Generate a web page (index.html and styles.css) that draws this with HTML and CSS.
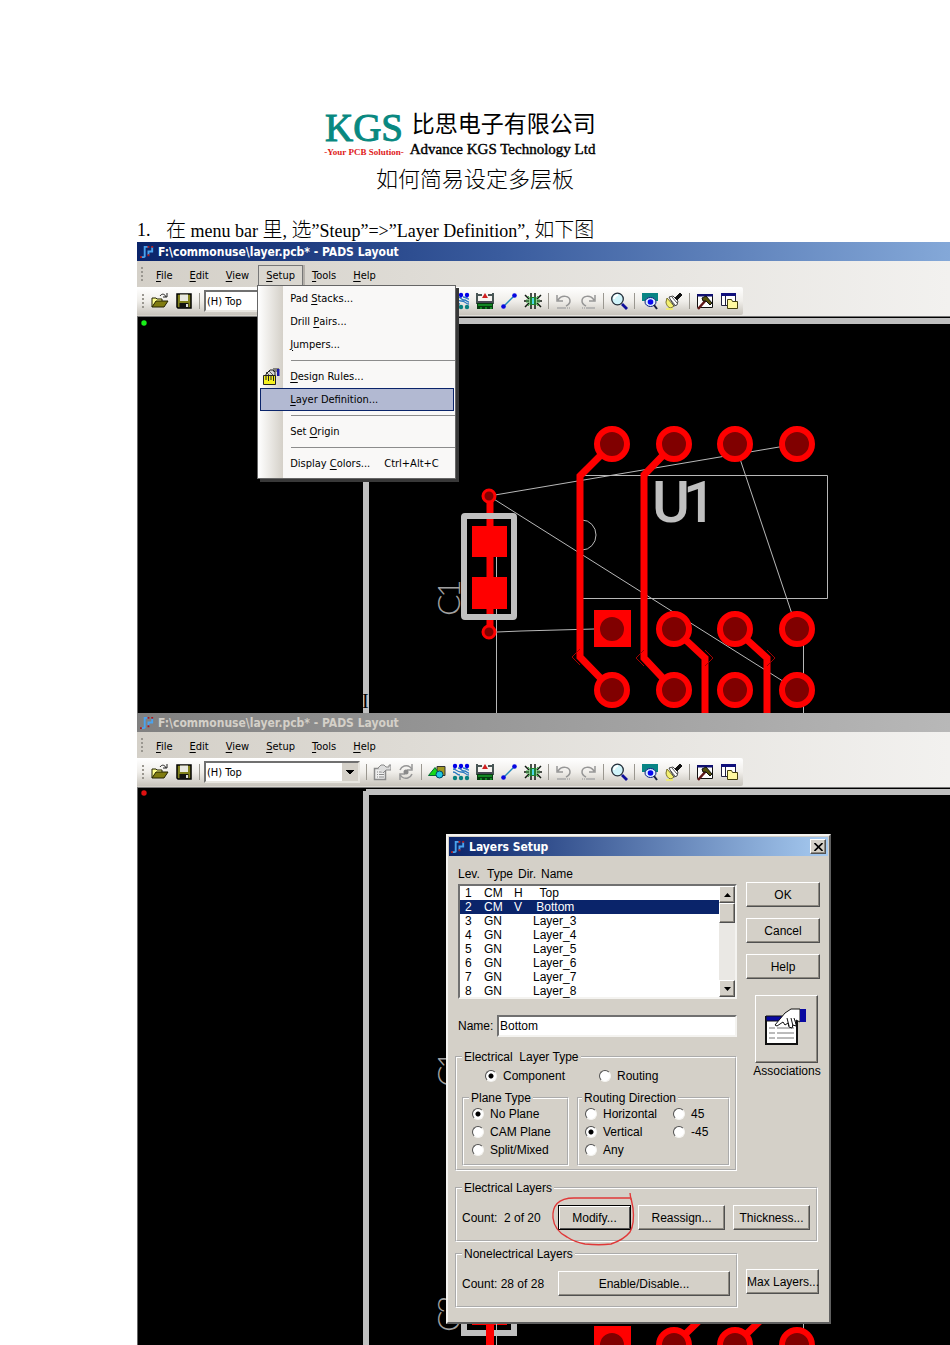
FILE: index.html
```html
<!DOCTYPE html>
<html lang="zh-CN">
<head>
<meta charset="utf-8">
<title>如何简易设定多层板</title>
<link rel="stylesheet" href="styles.css">
</head>
<body>
<svg class="sprite" aria-hidden="true">
  <symbol id="i-app" viewBox="0 0 16 16"><path d="M1 14h4M5 14V3h4" fill="none" stroke="#4aa3ee" stroke-width="2"/><path d="M9 12V8h4V3" fill="none" stroke="#4aa3ee" stroke-width="2"/><path d="M0 14h2M8 3h2M9 13v-2M13 2v2" stroke="#b01818" stroke-width="2"/></symbol>
  <symbol id="i-open" viewBox="0 0 18 18"><path d="M1 15V6h4l1 1h5v3" fill="#ffff90" stroke="#222200"/><path d="M1 15l4-6h12l-4 6z" fill="#807c10" stroke="#222200"/><path d="M9 4c2-3 5-2 6 1M12 5h4V1" fill="none" stroke="#222"/></symbol>
  <symbol id="i-save" viewBox="0 0 18 18"><path d="M2 2h14v14H3l-1-1z" fill="#80801c" stroke="#000" stroke-width="1.5"/><path d="M5 2.500h8V9H5z" fill="#e8e8e0"/><path d="M4.500 11h9v5h-9z" fill="#111"/><path d="M11 12h2v3h-2z" fill="#ddd"/></symbol>
  <symbol id="i-props" viewBox="0 0 18 18"><path d="M1.500 5.500h11v11h-11z" fill="#eee" stroke="#8a8a8a" stroke-width="1.500"/><path d="M4 9h1m1 0h5M4 11.500h1m1 0h5M4 14h1m1 0h5" stroke="#8a8a8a"/><path d="M5 5l3-3 3 0 2 2h3l0-2h2v5h-5l-3 3" fill="#ddd" stroke="#8a8a8a"/></symbol>
  <symbol id="i-cycle" viewBox="0 0 18 18"><path d="M3 7a6.500 6.500 0 0 1 10-3l2 2M15 11a6.500 6.500 0 0 1-10 3l-2-2" fill="none" stroke="#969696" stroke-width="1.500"/><path d="M15 1v6h-5M3 17v-6h5" fill="none" stroke="#969696" stroke-width="1.500"/><circle cx="9" cy="9" r="2.500" fill="#8a8a8a"/></symbol>
  <symbol id="i-shapes" viewBox="0 0 18 18"><path d="M9 3.500h8v9H9z" fill="#a09820" stroke="#333"/><path d="M.5 12.500L7 4.500l5 8z" fill="#18d818" stroke="#063"/><circle cx="11.500" cy="11.500" r="3.500" fill="#20c8e0" stroke="#046"/></symbol>
  <symbol id="i-dots" viewBox="0 0 18 18"><g fill="#0000e8"><circle cx="3" cy="3" r="2.200"/><circle cx="9" cy="3" r="2.200"/><circle cx="15" cy="3" r="2.200"/></g><g fill="#088080"><circle cx="3" cy="15" r="2.200"/><circle cx="9" cy="15" r="2.200"/><circle cx="15" cy="15" r="2.200"/></g><path d="M1 6c4 0 3 3 8 3s4 3 8 3M6 5c3 0 3 3 6 3s3 2 5 2M1 9c4 0 3 3 7 3M11 5c3 0 3 2 6 2" fill="none" stroke="#2878c0" stroke-width="1.300"/><path d="M3 3v3M9 3v3M15 3v3" stroke="#0000e8"/></symbol>
  <symbol id="i-board" viewBox="0 0 18 18"><path d="M1 1v11M17 1v11M2 3h4M12 3h4" stroke="#122" stroke-width="1.500"/><path d="M2 4h14v6H2z" fill="#f6f4f0"/><path d="M2 10h14" stroke="#112" stroke-width="1.500"/><path d="M6 6h6L9 1z" fill="#d02020"/><path d="M1 11h16v6H1z" fill="#063c10"/><path d="M2 13h14M4 16h2m3 0h2m3 0h2" stroke="#18a028" stroke-width="1.500"/></symbol>
  <symbol id="i-link" viewBox="0 0 18 18"><path d="M4 14L14 4" stroke="#2088b8" stroke-width="1.500"/><circle cx="3.500" cy="14.500" r="2.300" fill="#0808e0"/><circle cx="14.500" cy="3.500" r="2.300" fill="#0808e0"/></symbol>
  <symbol id="i-fan" viewBox="0 0 18 18"><path d="M7 5V1M11 5V1M7 17v-4M11 17v-4M5 7L1 3M5 11l-4 4M13 7l4-4M13 11l4 4M5 9H0M13 9h5" stroke="#101810" stroke-width="1.500"/><path d="M4 4l3 4-5 0M14 4l-3 4 5 0M4 14l3-4-5 0M14 14l-3-4 5 0" fill="none" stroke="#38a840"/><path d="M6 5h6v8H6z" fill="#208030"/><path d="M8 6h2v6H8z" fill="#50d8e8"/></symbol>
  <symbol id="i-undo" viewBox="0 0 18 18"><path d="M2 3v6h6M3 8c4-6 12-4 12 1 0 3-2 4-4 5" fill="none" stroke="#969696" stroke-width="1.500"/><path d="M2 16h9M12 16h1M14 16h1" stroke="#aaa" stroke-width="1.500"/></symbol>
  <symbol id="i-redo" viewBox="0 0 18 18"><path d="M16 3v6h-6M15 8C11 2 3 4 3 9c0 3 2 4 4 5" fill="none" stroke="#969696" stroke-width="1.500"/><path d="M7 16h9M5 16h1M3 16h1" stroke="#aaa" stroke-width="1.500"/></symbol>
  <symbol id="i-zoom" viewBox="0 0 18 18"><circle cx="7.500" cy="7" r="5.800" fill="#d0f4fa" stroke="#222c38" stroke-width="1.300"/><path d="M4 7c0-2 2-4 4-4" fill="none" stroke="#fff" stroke-width="2"/><path d="M12 12l5 5" stroke="#10109a" stroke-width="2.800"/></symbol>
  <symbol id="i-view" viewBox="0 0 18 18"><path d="M1 1h16v8H1z" fill="#088484"/><ellipse cx="9.500" cy="10" rx="5.500" ry="4.500" fill="#dcefff" stroke="#0c1c80"/><circle cx="9.500" cy="10" r="2.800" fill="#0808f0"/><path d="M13 13l3 4" stroke="#182040" stroke-width="2"/></symbol>
  <symbol id="i-brush" viewBox="0 0 18 18"><path d="M2 6l7 8-3 2c-3 0-5-4-5-6z" fill="#f4f070" stroke="#77702a"/><path d="M4 5l4-1 5 5-1 4-3 1z" fill="#fff" stroke="#444"/><path d="M5 7l5 6M7 5l5 6" stroke="#555"/><path d="M10 6l5-5 2 2-5 5z" fill="#111" stroke="#111"/><path d="M1 17h7" stroke="#f4f060" stroke-width="1.500"/></symbol>
  <symbol id="i-hammer" viewBox="0 0 18 18"><path d="M1.500 2.500h15v13h-15z" fill="#fff" stroke="#111"/><path d="M1 2h16v2.500H1z" fill="#101070"/><path d="M2 17l8-9" stroke="#601818" stroke-width="2.500"/><path d="M6 6l4-2 6 7-2 2-4-4-3 0z" fill="#56520c" stroke="#111"/></symbol>
  <symbol id="i-window" viewBox="0 0 18 18"><path d="M1.500 1.500h14v12h-14z" fill="#fff" stroke="#202040"/><path d="M1 1h15v3H1z" fill="#10107c"/><path d="M5.500 4v9" stroke="#202040"/><path d="M7.500 16.500v-9h4l1 2h5v7z" fill="#fff8a0" stroke="#444010"/></symbol>
  <symbol id="i-rules" viewBox="0 0 18 18"><path d="M4 6l4-4h3l2 2v5l-4 4H4z" fill="#d8d8d8" stroke="#222"/><path d="M4 4l5 5M7 3l5 5" stroke="#555"/><path d="M11 1h6M11 3h4" stroke="#222"/><path d="M15 1h2.500v7H15z" fill="#1818a8"/><path d="M1.500 7.500h12v9h-12z" fill="#f4f020" stroke="#222"/><path d="M4 8v4M6.500 8v5M9 8v4M11.500 8v5" stroke="#222"/></symbol>
</svg>

<main class="page">
  <header class="head">
    <div class="logo">
      <div class="logo-mark">
        <span class="kgs">KGS</span>
        <span class="slogan">-Your PCB Solution-</span>
      </div>
      <div class="logo-name">
        <span class="cn">比思电子有限公司</span>
        <span class="en">Advance KGS Technology Ltd</span>
      </div>
    </div>
    <h1>如何简易设定多层板</h1>
  </header>

  <p class="step"><span class="num">1.</span><span><b>在</b> menu bar <b>里</b>, <b>选</b>”Steup”=&gt;”Layer Definition”, <b>如下图</b></span></p>

  <section class="window">
    <div class="titlebar"><svg class="app"><use href="#i-app"/></svg><span>F:\commonuse\layer.pcb* - PADS Layout</span></div>
    <nav class="menubar">
      <span class="grip"></span>
      <div class="entry"><button><u>F</u>ile</button></div>
      <div class="entry"><button><u>E</u>dit</button></div>
      <div class="entry"><button><u>V</u>iew</button></div>
      <div class="entry open"><button><u>S</u>etup</button>
        <div class="menu">
          <button>Pad <u>S</u>tacks...</button>
          <button>Drill <u>P</u>airs...</button>
          <button><u>J</u>umpers...</button>
          <hr>
          <button><svg class="icon"><use href="#i-rules"/></svg><u>D</u>esign Rules...</button>
          <button class="active"><u>L</u>ayer Definition...</button>
          <hr>
          <button>Set <u>O</u>rigin</button>
          <hr>
          <button>Display <u>C</u>olors...<kbd>Ctrl+Alt+C</kbd></button>
        </div>
      </div>
      <div class="entry"><button><u>T</u>ools</button></div>
      <div class="entry"><button><u>H</u>elp</button></div>
    </nav>
    <div class="toolrow">
      <div class="toolbar">
        <span class="grip"></span>
        <button aria-label="Open"><svg class="icon"><use href="#i-open"/></svg></button>
        <button aria-label="Save"><svg class="icon"><use href="#i-save"/></svg></button>
        <i class="sep"></i>
        <select aria-label="Layer"><option>(H) Top</option></select>
        <i class="sep"></i>
        <button aria-label="Properties"><svg class="icon"><use href="#i-props"/></svg></button>
        <button aria-label="Cycle"><svg class="icon"><use href="#i-cycle"/></svg></button>
        <i class="sep"></i>
        <button aria-label="Drafting"><svg class="icon"><use href="#i-shapes"/></svg></button>
        <button aria-label="Design"><svg class="icon"><use href="#i-dots"/></svg></button>
        <button aria-label="Dimensioning"><svg class="icon"><use href="#i-board"/></svg></button>
        <button aria-label="Route"><svg class="icon"><use href="#i-link"/></svg></button>
        <button aria-label="Fanout"><svg class="icon"><use href="#i-fan"/></svg></button>
        <i class="sep"></i>
        <button aria-label="Undo"><svg class="icon"><use href="#i-undo"/></svg></button>
        <button aria-label="Redo"><svg class="icon"><use href="#i-redo"/></svg></button>
        <i class="sep"></i>
        <button aria-label="Zoom"><svg class="icon"><use href="#i-zoom"/></svg></button>
        <i class="sep"></i>
        <button aria-label="View board"><svg class="icon"><use href="#i-view"/></svg></button>
        <button aria-label="Redraw"><svg class="icon"><use href="#i-brush"/></svg></button>
        <i class="sep"></i>
        <button aria-label="Tools"><svg class="icon"><use href="#i-hammer"/></svg></button>
        <button aria-label="Explorer"><svg class="icon"><use href="#i-window"/></svg></button>
      </div>
    </div>
    <svg class="board board-one" role="img" aria-label="PCB layout with U1 and C1">
      <g transform="translate(-138 -316)">
        <path d="M366 320h6000M366 320V720" fill="none" stroke="#c0c0c0" stroke-width="6"/>
        <text class="note" x="362" y="707">Ic</text>
        <circle cx="144" cy="322" r="2.700" fill="#18f018"/>
        <g fill="none" stroke="#b8b8b8">
          <path d="M489 495L797 443M489 495L797 689M735 443L797 628M497 631l24-1 73-2M496.500 540V712M803.500 640v72"/>
          <path d="M581.500 474.500h246v123h-246zM582 519a14 15 0 0 1 0 30"/>
        </g>
        <g fill="none" stroke="#f00" stroke-width="7">
          <path d="M612 443l-32 32v181l32 33M674 443l-30 31v183l30 32M674 628l31 29v60M735 628l32 29v60M490 495v136"/>
        </g>
        <g fill="none" stroke="#a00000"><path d="M580 648l-8 8 8 8M644 649l-8 8 8 8M705 649l8 8-8 8M767 649l8 8-8 8"/></g>
        <path d="M472 525h35v31h-35zM472 576h35v32h-35z" fill="#f00"/>
        <rect x="464" y="515" width="50" height="101" rx="1" fill="none" stroke="#c0c0c0" stroke-width="6"/>
        <path d="M594 609h37v37h-37z" fill="#f00"/>
        <g fill="#800000" stroke="#f00" stroke-width="6">
          <circle cx="612" cy="443" r="15"/><circle cx="674" cy="443" r="15"/><circle cx="735" cy="443" r="15"/><circle cx="797" cy="443" r="15"/>
          <circle cx="612" cy="628" r="15" stroke="none"/><circle cx="674" cy="628" r="15"/><circle cx="735" cy="628" r="15"/><circle cx="797" cy="628" r="15"/>
          <circle cx="612" cy="628" r="15"/><circle cx="612" cy="689" r="15"/><circle cx="674" cy="689" r="15"/><circle cx="735" cy="689" r="15"/><circle cx="797" cy="689" r="15"/>
        </g>
        <g fill="#800000" stroke="#f00" stroke-width="3"><circle cx="489" cy="495" r="6"/><circle cx="489" cy="631" r="6"/></g>
        <text class="ref-big" x="652 683" y="521">U1</text>
        <text class="ref-thin" x="0 18" transform="translate(460 615) rotate(-90)">C1</text>
      </g>
    </svg>
  </section>

  <section class="window inactive">
    <div class="titlebar"><svg class="app"><use href="#i-app"/></svg><span>F:\commonuse\layer.pcb* - PADS Layout</span></div>
    <nav class="menubar">
      <span class="grip"></span>
      <div class="entry"><button><u>F</u>ile</button></div>
      <div class="entry"><button><u>E</u>dit</button></div>
      <div class="entry"><button><u>V</u>iew</button></div>
      <div class="entry"><button><u>S</u>etup</button></div>
      <div class="entry"><button><u>T</u>ools</button></div>
      <div class="entry"><button><u>H</u>elp</button></div>
    </nav>
    <div class="toolrow">
      <div class="toolbar">
        <span class="grip"></span>
        <button aria-label="Open"><svg class="icon"><use href="#i-open"/></svg></button>
        <button aria-label="Save"><svg class="icon"><use href="#i-save"/></svg></button>
        <i class="sep"></i>
        <select aria-label="Layer"><option>(H) Top</option></select>
        <i class="sep"></i>
        <button aria-label="Properties"><svg class="icon"><use href="#i-props"/></svg></button>
        <button aria-label="Cycle"><svg class="icon"><use href="#i-cycle"/></svg></button>
        <i class="sep"></i>
        <button aria-label="Drafting"><svg class="icon"><use href="#i-shapes"/></svg></button>
        <button aria-label="Design"><svg class="icon"><use href="#i-dots"/></svg></button>
        <button aria-label="Dimensioning"><svg class="icon"><use href="#i-board"/></svg></button>
        <button aria-label="Route"><svg class="icon"><use href="#i-link"/></svg></button>
        <button aria-label="Fanout"><svg class="icon"><use href="#i-fan"/></svg></button>
        <i class="sep"></i>
        <button aria-label="Undo"><svg class="icon"><use href="#i-undo"/></svg></button>
        <button aria-label="Redo"><svg class="icon"><use href="#i-redo"/></svg></button>
        <i class="sep"></i>
        <button aria-label="Zoom"><svg class="icon"><use href="#i-zoom"/></svg></button>
        <i class="sep"></i>
        <button aria-label="View board"><svg class="icon"><use href="#i-view"/></svg></button>
        <button aria-label="Redraw"><svg class="icon"><use href="#i-brush"/></svg></button>
        <i class="sep"></i>
        <button aria-label="Tools"><svg class="icon"><use href="#i-hammer"/></svg></button>
        <button aria-label="Explorer"><svg class="icon"><use href="#i-window"/></svg></button>
      </div>
    </div>
    <div class="stage">
      <svg class="board board-two" aria-hidden="true">
        <g transform="translate(-138 -787)">
          <path d="M366 791h6000M366 790V1400" fill="none" stroke="#c0c0c0" stroke-width="6"/>
          <circle cx="144" cy="792" r="2.700" fill="#e01010"/>
          <text class="ref-thin" x="0 18" transform="translate(460 1086) rotate(-90)">C1</text>
          <text class="ref-thin" x="0 18" transform="translate(460 1331) rotate(-90)">C2</text>
          <path d="M472 1318h35v6h-35z" fill="#f00"/>
          <path d="M496.500 1320v30M803.500 1315v20" stroke="#b8b8b8"/>
          <rect x="464" y="1240" width="50" height="92" fill="none" stroke="#c0c0c0" stroke-width="6"/>
          <path d="M490 1315v40" stroke="#f00" stroke-width="8"/>
          <path d="M594 1325h37v37h-37z" fill="#f00"/>
          <path d="M674 1344l28-27M735 1344l28-27" stroke="#f00" stroke-width="7"/>
          <g fill="#800000" stroke="#f00" stroke-width="6"><circle cx="612" cy="1344" r="15"/><circle cx="674" cy="1344" r="15"/><circle cx="735" cy="1344" r="15"/><circle cx="797" cy="1344" r="15"/></g>
        </g>
      </svg>

      <form class="dialog" onsubmit="return false">
        <div class="dlg-title"><svg class="app"><use href="#i-app"/></svg><span>Layers Setup</span>
          <button class="close" type="button" aria-label="Close"><svg viewBox="0 0 8 8"><path d="M0 0l8 8M8 0L0 8" stroke="#000" stroke-width="1.600"/></svg></button>
        </div>
        <div class="dlg-body">
          <div class="upper">
            <div class="settings">
              <div class="cols"><span>Lev.</span><span>Type</span><span>Dir.</span><span>Name</span></div>
              <div class="listbox">
                <table>
                  <tbody>
                    <tr><td>1</td><td>CM</td><td>H</td><td>&nbsp; Top</td></tr>
                    <tr class="selected"><td>2</td><td>CM</td><td>V</td><td>&nbsp;Bottom</td></tr>
                    <tr><td>3</td><td>GN</td><td></td><td>Layer_3</td></tr>
                    <tr><td>4</td><td>GN</td><td></td><td>Layer_4</td></tr>
                    <tr><td>5</td><td>GN</td><td></td><td>Layer_5</td></tr>
                    <tr><td>6</td><td>GN</td><td></td><td>Layer_6</td></tr>
                    <tr><td>7</td><td>GN</td><td></td><td>Layer_7</td></tr>
                    <tr><td>8</td><td>GN</td><td></td><td>Layer_8</td></tr>
                  </tbody>
                </table>
                <div class="scroll">
                  <button type="button" aria-label="Up"><svg viewBox="0 0 7 4"><path d="M0 4L3.500 0 7 4z"/></svg></button>
                  <span class="thumb"></span>
                  <span class="track"></span>
                  <button type="button" aria-label="Down"><svg viewBox="0 0 7 4"><path d="M0 0h7L3.500 4z"/></svg></button>
                </div>
              </div>
              <div class="name-row"><label for="lname">Name:</label><input id="lname" type="text" value="Bottom"></div>
              <fieldset class="type">
                <legend>Electrical&nbsp; Layer Type</legend>
                <div class="kind">
                  <label><input type="radio" name="kind" checked>Component</label>
                  <label><input type="radio" name="kind">Routing</label>
                </div>
                <div class="pair">
                  <fieldset class="plane">
                    <legend>Plane Type</legend>
                    <label><input type="radio" name="plane" checked>No Plane</label>
                    <label><input type="radio" name="plane">CAM Plane</label>
                    <label><input type="radio" name="plane">Split/Mixed</label>
                  </fieldset>
                  <fieldset class="direction">
                    <legend>Routing Direction</legend>
                    <label><input type="radio" name="dir">Horizontal</label>
                    <label><input type="radio" name="dir">45</label>
                    <label><input type="radio" name="dir" checked>Vertical</label>
                    <label><input type="radio" name="dir">-45</label>
                    <label><input type="radio" name="dir">Any</label>
                  </fieldset>
                </div>
              </fieldset>
            </div>
            <div class="side">
              <button class="btn" type="submit">OK</button>
              <button class="btn" type="button">Cancel</button>
              <button class="btn" type="button">Help</button>
              <div class="assoc">
                <button class="btn big" type="button" aria-labelledby="assoc-label">
                  <svg viewBox="0 0 44 40"><path d="M2 9h31v27H2z" fill="#fff" stroke="#111" stroke-width="2"/><path d="M2 8h31v5H2z" fill="#0808a0" stroke="#111"/><path d="M5 20h6m2 0h17M5 25h6m2 0h17M5 30h6m2 0h17" stroke="#777"/><path d="M11 17L21 5l6-4h9v13l-4-2 0 6-3-1-1 3-3-1-1-4-3 2-2-3-6 4z" fill="#fff" stroke="#111"/><path d="M23 10l2 8M27 10l2 8M30 10l2 6" fill="none" stroke="#111"/><path d="M36 1h6v13h-6z" fill="#0808a0"/></svg>
                </button>
                <span id="assoc-label">Associations</span>
              </div>
            </div>
          </div>
          <fieldset class="counts">
            <legend>Electrical Layers</legend>
            <span class="count">Count:&nbsp; 2 of 20</span>
            <div class="marked">
              <button class="btn default" type="button">Modify...</button>
              <svg class="ring" viewBox="0 0 86 56" aria-hidden="true"><path d="M80 1l1 7M80 6H24C8 6 2 14 3 26c1 9 6 15 14 19 6 4 12 6 18 7 10 1 18 1 26 0 9-3 15-7 19-12 4-7 4-15 3-24l-2-10" fill="none" stroke="#e03838" stroke-width="1.400"/></svg>
            </div>
            <button class="btn reassign" type="button">Reassign...</button>
            <button class="btn thick" type="button">Thickness...</button>
          </fieldset>
          <div class="lower">
            <fieldset class="counts grow">
              <legend>Nonelectrical Layers</legend>
              <span class="count">Count: 28 of 28</span>
              <button class="btn wide" type="button">Enable/Disable...</button>
            </fieldset>
            <button class="btn max" type="button">Max Layers...</button>
          </div>
        </div>
      </form>
    </div>
  </section>
</main>
</body>
</html>
```
FILE: styles.css
```css
* { box-sizing: border-box; }
body { margin: 0; background: #fff; color: #000; font-family: "Liberation Serif", "Noto Sans CJK SC", serif; }
button, select, input { font: inherit; color: inherit; }
u { text-underline-offset: 2px; }
.sprite { display: none; }
.page { padding: 110px 0 0 137px; overflow: hidden; }

.head { display: flex; flex-direction: column; align-items: center; padding-right: 137px; }
.logo { display: flex; gap: 6px; margin-right: 30px; height: 52px; }
.logo-mark, .logo-name { display: flex; flex-direction: column; }
.logo-mark { align-items: center; }
.kgs { font-size: 39px; line-height: 36px; color: #088880; -webkit-text-stroke: 1px #088880; }
.slogan { font-size: 9px; line-height: 12px; font-weight: bold; color: #e02020; }
.cn { padding: 1px 0 0 2px; font-size: 23px; line-height: 28px; font-weight: 400; }
.en { font-size: 15px; line-height: 20px; -webkit-text-stroke: 0.400px #000; }
h1 { margin: 0; font-size: 22px; line-height: 36px; font-weight: 300; }
.step { display: flex; margin: 22px 0 0; font-size: 18px; line-height: 21px; white-space: nowrap; }
.step b { font-size: 20px; line-height: 20px; font-weight: 300; }
.num { width: 29px; }

.window { font-family: "DejaVu Sans Condensed", "Noto Sans", sans-serif; font-size: 11px; background: linear-gradient(90deg, #d4d0c8, #f2f1ef); }
.titlebar { display: flex; align-items: center; gap: 3px; height: 19px; padding-left: 3px; color: #fff; font-weight: bold; font-size: 12px; background: linear-gradient(90deg, #0a246a, #3a5c9e 45%, #84a8d8); }
.inactive .titlebar { color: #d4d0c8; background: linear-gradient(90deg, #808080, #b8b8b8); }
.app { width: 15px; height: 15px; flex: none; }
.menubar { display: flex; align-items: center; gap: 1px; height: 26px; padding-left: 2px; }
.grip { width: 8px; height: 14px; background: repeating-linear-gradient(#9a9790 0 2px, transparent 2px 4px) 2px 0 / 2px 14px no-repeat; }
.entry { position: relative; padding-top: 2px; }
.entry > button { display: block; height: 21px; padding: 0 7px; border: 1px solid transparent; background: none; }
.entry.open > button { border-color: #777; border-bottom: 0; background: #dad7d0; box-shadow: 2px 0 #b4b0aa; }
.menu { position: absolute; z-index: 2; top: 22px; left: -1px; width: 199px; padding: 1px 0 3px; border: 1px solid #666; background: linear-gradient(90deg, #fff 0, #d4d0c8 25px, #f9f8f7 25px); box-shadow: 3px 3px #383838; }
.menu button { position: relative; display: flex; align-items: center; width: 194px; height: 23px; margin-left: 2px; padding: 0 0 0 29px; border: 1px solid transparent; background: none; white-space: pre; }
.menu .active { border-color: #0a246a; background: #b2b9d2; }
.menu .icon { position: absolute; left: 1px; top: 2px; }
.menu hr { height: 1px; margin: 4px 0 4px 33px; border: 0; background: #8c8c8c; }
.menu kbd { margin-left: 14px; font: inherit; }

.toolrow { height: 30px; border-bottom: 1px solid #777; }
.toolbar { display: inline-flex; align-items: center; height: 28px; padding: 0 2px 0 3px; border-radius: 0 2px 2px 0; background: linear-gradient(#fff, #f0eeea 50%, #c8c4bc); }
.toolbar button { display: flex; align-items: center; justify-content: center; width: 24px; height: 24px; padding: 0; border: 0; background: none; }
.icon { width: 18px; height: 18px; flex: none; }
.sep { width: 1px; height: 16px; margin: 0 3px; background: #9a9790; }
.toolbar select { width: 156px; height: 22px; margin: 0 3px 0 1px; padding: 0 0 0 1px; appearance: none; border: 2px solid; border-color: #707070 #e8e6e0 #e8e6e0 #707070; border-radius: 0; background: conic-gradient(from -45deg at 50% 100%, #000 90deg, transparent 0) right 4px top 7px / 8px 4px no-repeat, linear-gradient(#d4d0c8, #d4d0c8) right / 16px 100% no-repeat, #fff; }

.board { display: block; width: 100%; background: #000; border-left: 1px solid #666; }
.board-one { height: 396px; }
.board-two { height: 558px; }
.note { font: 20px "Liberation Serif", serif; fill: #000; }
.ref-big { font: 500 58px Roboto, "Liberation Sans", sans-serif; fill: #c0c0c0; }
.ref-thin { font: 300 32px Lato, sans-serif; fill: #a0a0a0; }
.stage { position: relative; }

.dialog { position: absolute; top: 46px; left: 309px; width: 385px; padding: 1px; border: 2px solid; border-color: #f4f3f0 #606060 #606060 #f4f3f0; background: #d4d0c8; font-family: "Liberation Sans", sans-serif; font-size: 12px; line-height: 14px; }
.dlg-title { display: flex; align-items: center; gap: 3px; height: 19px; padding: 0 2px; color: #fff; font: bold 12px "DejaVu Sans Condensed", sans-serif; background: linear-gradient(90deg, #0a246a, #a6caf0); }
.close { display: flex; align-items: center; justify-content: center; width: 16px; height: 15px; margin-left: auto; padding: 0; }
.close svg { width: 9px; height: 8px; }
.close, .scroll button, .thumb, .btn { border: 1px solid; border-color: #fff #505050 #505050 #fff; border-radius: 0; background: #d4d0c8; box-shadow: inset -1px -1px #8c8880; }
.dlg-body { padding: 11px 9px 13px 6px; }
.upper { display: flex; gap: 9px; }
.settings { flex: 1; }
.cols { display: flex; padding-left: 3px; line-height: 14px; }
.cols span:nth-child(1) { width: 29px; }
.cols span:nth-child(2) { width: 31px; }
.cols span:nth-child(3) { width: 23px; }
.listbox { display: flex; margin: 3px 0 16px 3px; height: 115px; border: 2px solid; border-color: #707070 #f4f3f0 #f4f3f0 #707070; background: #fff; }
.listbox table { flex: 1; border-spacing: 0; table-layout: fixed; height: 100%; }
.listbox td { padding: 1px 0 0; line-height: 12px; }
.listbox td:nth-child(1) { width: 24px; padding-left: 5px; }
.listbox td:nth-child(2) { width: 30px; }
.listbox td:nth-child(3) { width: 19px; }
.selected { background: #0a246a; color: #fff; }
.scroll { display: flex; flex-direction: column; width: 16px; }
.scroll button { display: flex; align-items: center; justify-content: center; width: 16px; height: 17px; padding: 0; }
.scroll svg { width: 7px; height: 4px; }
.thumb { height: 20px; }
.track { flex: 1; background: #eae8e4; }
.name-row { display: flex; align-items: center; padding-left: 3px; }
.name-row label { width: 39px; }
.name-row input { flex: 1; min-width: 0; height: 22px; padding: 0 1px; border: 2px solid; border-color: #707070 #f4f3f0 #f4f3f0 #707070; border-radius: 0; background: #fff; }
fieldset { min-width: 0; margin: 0; padding: 0; border: 2px groove #fff; }
legend { padding: 0 2px; line-height: 14px; }
.type { margin-top: 13px; padding: 5px 5px 3px; }
label { display: flex; align-items: center; white-space: nowrap; }
input[type=radio] { appearance: none; flex: none; width: 12px; height: 12px; margin: 0 6px 0 0; border: 1px solid; border-color: #505050 #f4f3f0 #f4f3f0 #505050; border-radius: 50%; background: #fff; }
input[type=radio]:checked { background: radial-gradient(circle, #000 2px, #fff 3px); }
.kind { display: flex; padding: 0 0 8px 23px; }
.kind label { width: 114px; }
.pair { display: flex; gap: 8px; }
.plane { width: 107px; height: 75px; padding-left: 8px; }
.direction { display: grid; grid-template: repeat(3, 18px) / 88px 1fr; width: 153px; height: 75px; padding-left: 6px; }
.plane label, .direction label { height: 18px; }
.plane legend, .direction legend { margin-left: -3px; }
.side { display: flex; flex-direction: column; width: 74px; padding-top: 15px; gap: 11px; }
.btn { height: 25px; padding: 0; white-space: nowrap; }
.assoc { display: flex; flex-direction: column; align-items: center; margin-top: 5px; gap: 1px; }
.big { width: 63px; height: 68px; margin-left: 6px; }
.big svg { width: 44px; height: 40px; }
.assoc span { margin-left: 8px; }
.counts { display: flex; align-items: center; height: 61px; margin: 10px 0 0; padding: 0 6px 0 5px; }
.upper + .counts { margin-right: 1px; }
.count { width: 96px; }
.marked { position: relative; }
.default { width: 73px; border-color: #000; box-shadow: inset 1px 1px #fff, inset -1px -1px #505050; }
.ring { position: absolute; left: -8px; top: -13px; width: 86px; height: 56px; pointer-events: none; }
.reassign { width: 87px; margin-left: 7px; }
.thick { width: 77px; margin-left: 8px; }
.lower { display: flex; align-items: center; gap: 8px; margin-top: 5px; }
.lower .counts { flex: 1; margin: 0; }
.wide { flex: 1; }
.max { width: 73px; margin-top: 8px; }
```
